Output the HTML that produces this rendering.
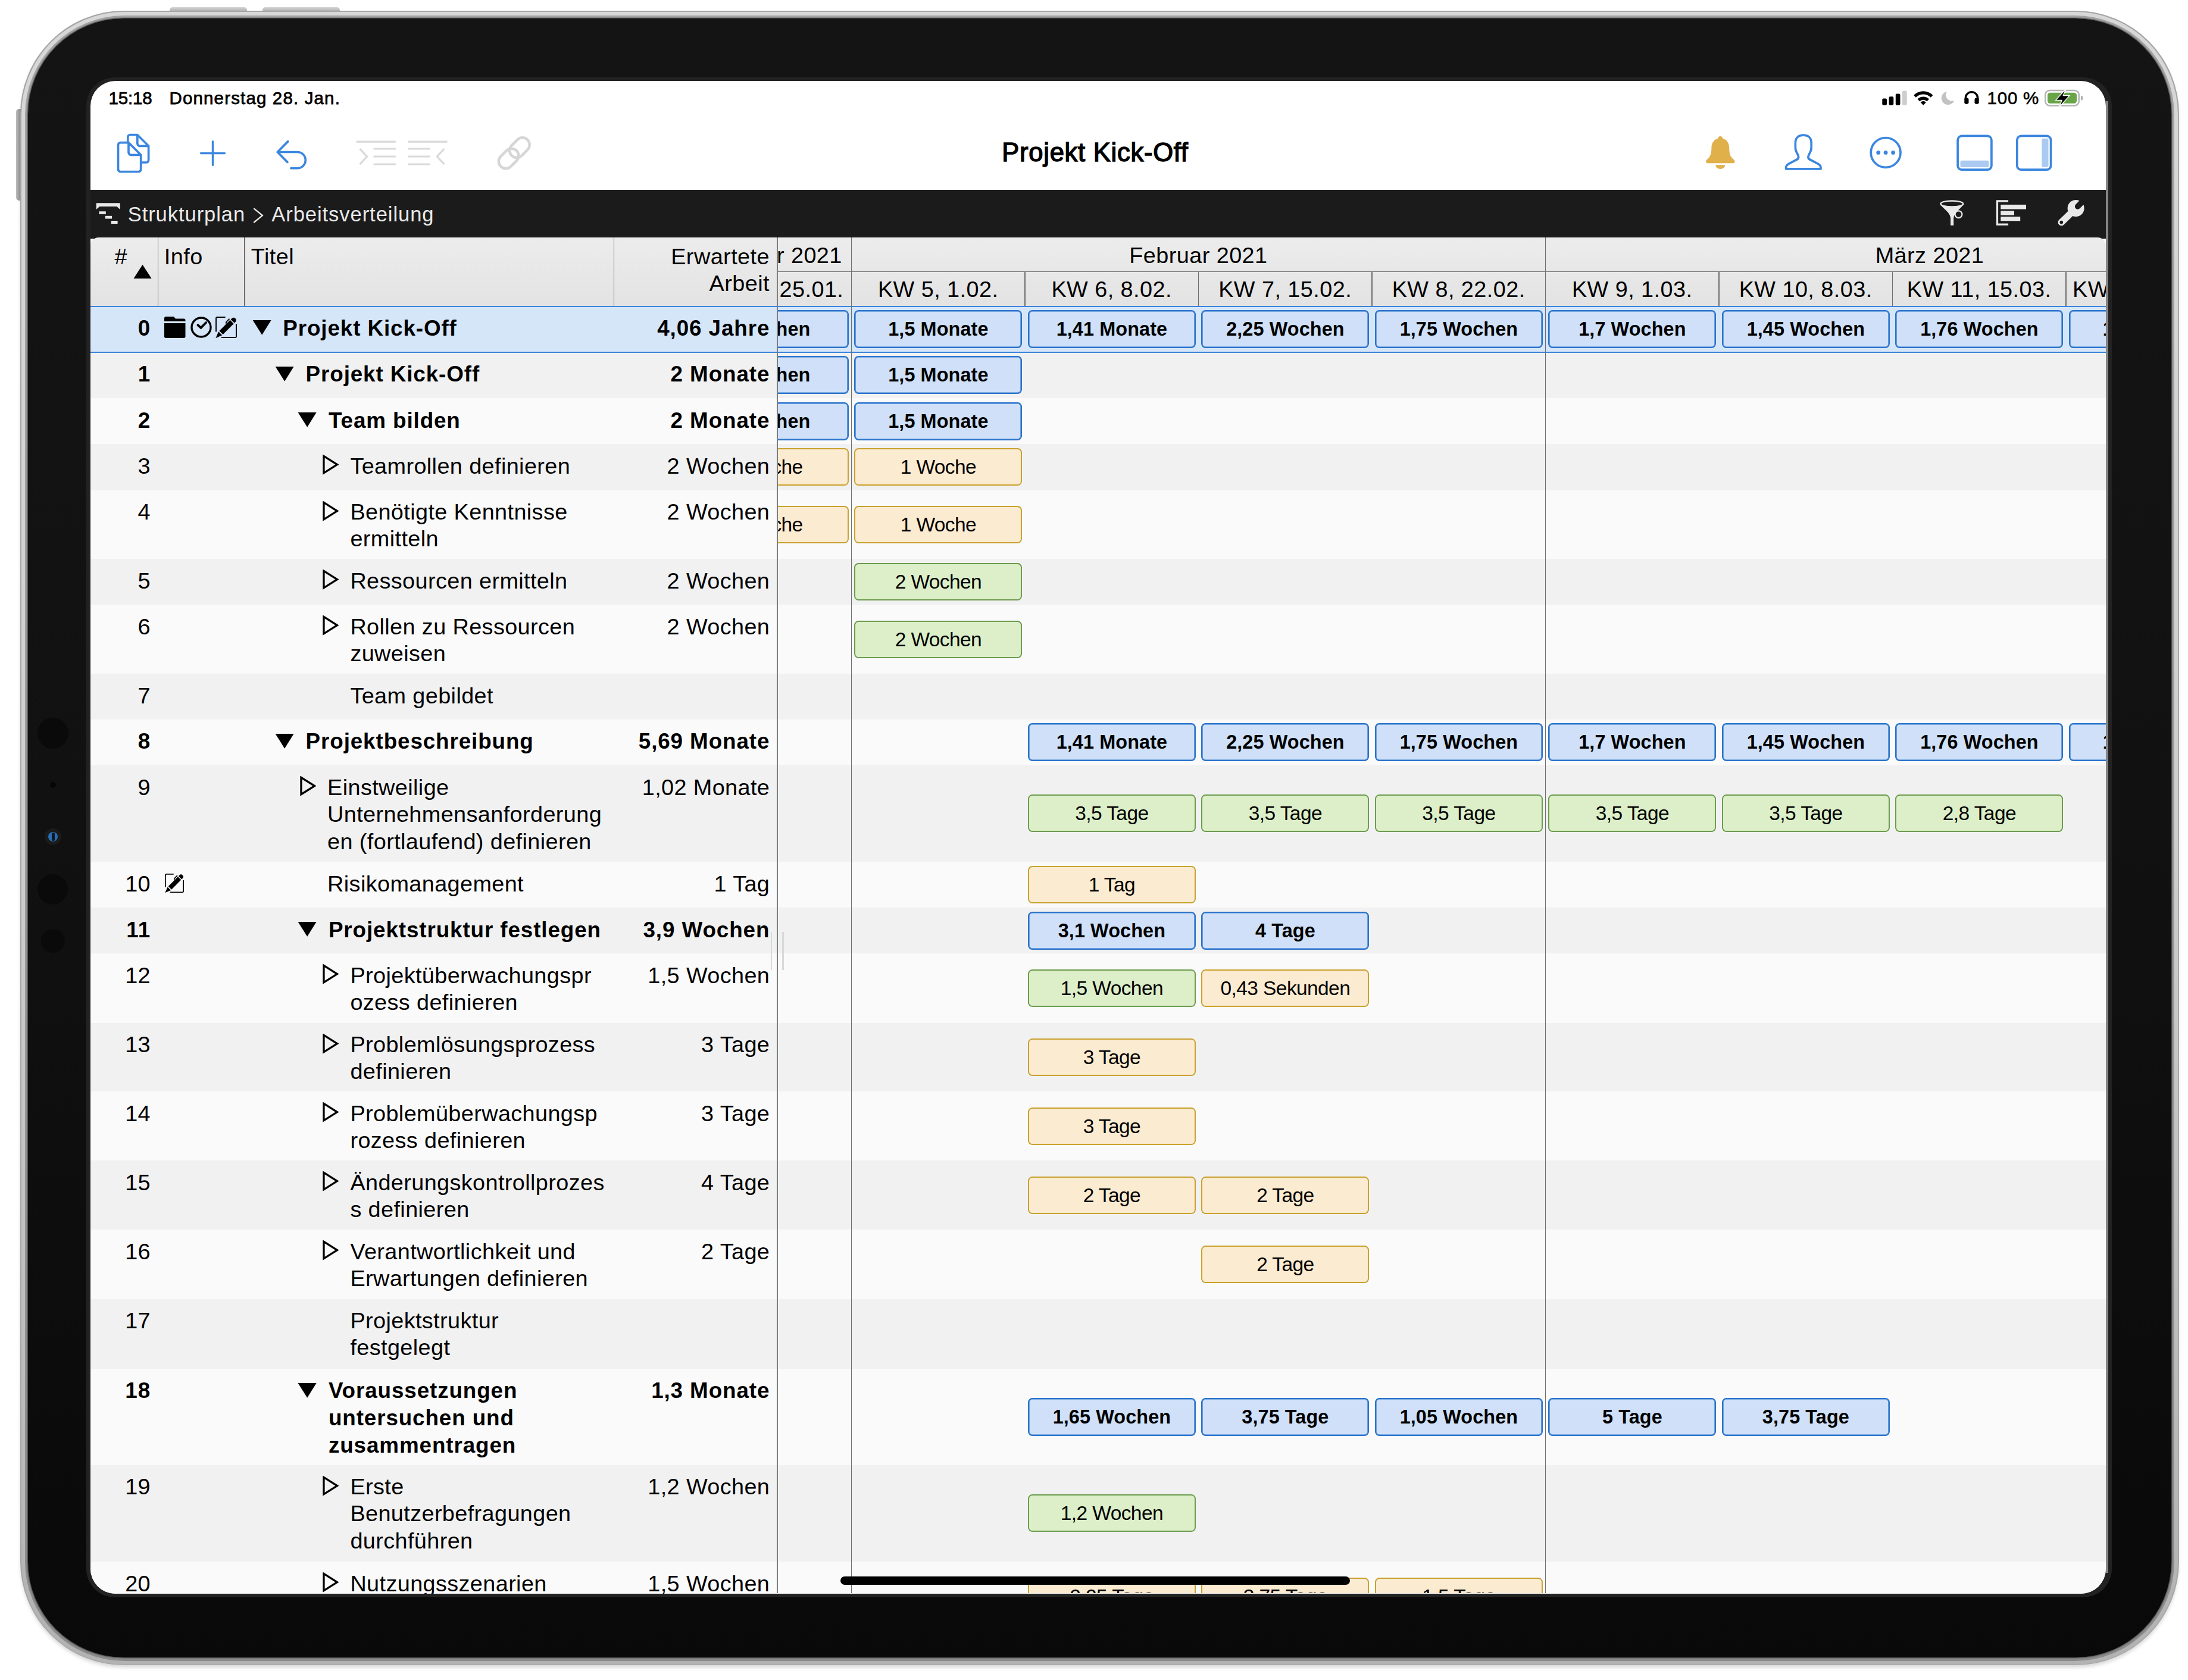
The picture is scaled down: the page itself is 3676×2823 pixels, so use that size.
<!DOCTYPE html><html lang="de"><head><meta charset="utf-8"><title>Projekt Kick-Off</title><style>html,body{margin:0;padding:0}
body{width:3676px;height:2823px;background:#fff;position:relative;overflow:hidden;font-family:"Liberation Sans",Arial,sans-serif;color:#000}
div,span,svg{position:absolute;box-sizing:border-box}
#dev{left:34px;top:18px;width:3626.5px;height:2780px;border-radius:174px;background:#a6a6a6;box-shadow:0 5px 6px -1px rgba(0,0,0,.16)}
#dev2{left:1.5px;top:1.5px;right:1.5px;bottom:1.5px;border-radius:172.5px;background:linear-gradient(180deg,#d8d8d8,#cecece 50%,#b2b2b2 100%)}
#dev3{left:7.5px;top:7.5px;right:7.5px;bottom:7.5px;border-radius:166.5px;background:linear-gradient(180deg,#a4a4a4,#9a9a9a 50%,#8a8a8a 100%)}
#bez{left:12.5px;top:12.5px;right:12.5px;bottom:13.5px;border-radius:161px;background:linear-gradient(180deg,#141414 0%,#111 50%,#090909 100%);box-shadow:0 0 2px 1px #3a3a3a}
#rim{left:145px;top:130px;width:3403px;height:2554px;border-radius:48px;background:#222}
#screen{left:152px;top:136px;width:3385.7px;height:2541.5px;border-radius:42px;overflow:hidden;background:#fff}
#in{left:-152px;top:-136px;width:3676px;height:2823px}
.btn{background:linear-gradient(180deg,#d6d6d6,#a8a8a8);border-radius:5px 5px 0 0}
.cam{border-radius:50%;background:#0a0a0a}
/* status */
.st{font-size:29.5px;line-height:36px;top:148.5px;white-space:nowrap;letter-spacing:.4px;-webkit-text-stroke:.75px #000}
#title{left:1540px;width:600px;top:230.7px;text-align:center;font-size:43.5px;line-height:50px;font-weight:400;letter-spacing:.75px;-webkit-text-stroke:1.45px #000;white-space:nowrap}
#dark{left:152px;top:319px;width:3386px;height:82px;background:#1b1b1b}
.bc{top:337.5px;font-size:34.5px;line-height:40px;color:#e9e9e9;white-space:nowrap;letter-spacing:.95px}
#hdr{left:152px;top:398.6px;width:3386px;height:115.6px;background:linear-gradient(180deg,#ececec,#e3e3e3);border-radius:14px 14px 0 0}
.h{font-size:37.8px;line-height:45.3px;white-space:nowrap;letter-spacing:.45px}
.vl{width:1.4px;background:#6f6f6f}
.hl{height:1.4px;background:#6f6f6f}
/* rows */
.row{left:152px;width:3386px;background:#fafafa;font-size:37.8px;line-height:45.75px;letter-spacing:.4px}
.row.odd{background:#f1f1f1}
.row.sel{background:#d6e6f9;box-shadow:inset 0 2px 0 #3a84db,inset 0 -2px 0 #3a84db}
.row.bd{font-weight:700;font-size:36.8px;letter-spacing:.9px}
.row.bd>.tt{margin-left:1.8px}
.num{left:0;width:101px;text-align:right;top:13.53px}
.tt{top:13.53px;white-space:nowrap}
.wk{left:600px;width:541.3px;text-align:right;top:13.53px;white-space:nowrap}
.ic{width:36px;height:36px;top:18.1px}
.tri{width:32.3px;height:25.2px;top:23.8px}
.trr{width:27.4px;height:33.3px;top:18.3px}
#gantt{left:1306.5px;top:399px;width:2231.5px;height:2278px;overflow:hidden}
.bx{width:282px;height:63px;border:2px solid;border-radius:7.5px;text-align:center;font-size:33.5px;line-height:59px;white-space:nowrap;letter-spacing:-.6px}
.bx.b{background:#cfe0f8;border-color:#2a74cc;box-shadow:inset 0 0 0 .6px #2a74cc;height:64px;font-weight:700;font-size:32.4px;letter-spacing:.1px;line-height:60.6px}
.bx.o{background:#fbebd0;border-color:#c9a12e}
.bx.g{background:#dcefc9;border-color:#6c9c4e}
.wkh{width:291.5px;text-align:center;top:65.6px}
.ic.sm{width:32px;height:32px;top:19.6px}
</style></head><body>
<div class="btn" style="left:285px;top:12px;width:130px;height:8px"></div>
<div class="btn" style="left:441px;top:12px;width:130px;height:8px"></div>
<div class="btn" style="left:27px;top:183px;width:9px;height:154px;border-radius:5px 0 0 5px;background:linear-gradient(90deg,#bbb,#8a8a8a)"></div>
<div id="dev"><div id="dev2"></div><div id="dev3"></div><div id="bez"></div></div>
<div class="cam" style="left:63px;top:1206px;width:52px;height:52px"></div>
<div class="cam" style="left:84px;top:1314px;width:10px;height:10px;background:#060606"></div>
<div class="cam" style="left:75px;top:1392px;width:28px;height:28px;background:#1b1b1b"></div>
<div class="cam" style="left:81px;top:1398px;width:16px;height:16px;background:#2a6db3"></div>
<div class="cam" style="left:86.5px;top:1399px;width:5px;height:14px;background:#101820;border-radius:2px"></div>
<div class="cam" style="left:63px;top:1469px;width:51px;height:51px"></div>
<div class="cam" style="left:69px;top:1561px;width:40px;height:40px"></div>
<div id="rim"></div>
<div id="edge" style="left:3538.200px;top:170px;width:3.600px;height:2473px;background:#858585"></div>

<div id="screen"><div id="in">
<!-- status bar -->
<span class="st" style="left:182.500px;top:147px;letter-spacing:-.15px">15:18</span>
<span class="st" style="left:284.500px;top:147px;letter-spacing:1.15px">Donnerstag 28. Jan.</span>
<span class="st" style="left:3338.500px;top:147px;letter-spacing:.8px;-webkit-text-stroke-width:.6px">100 %</span>
<svg style="left:3160px;top:148px" width="345" height="34" viewBox="3160 148 345 34">
<rect x="3162.300" y="165.600" width="7.700" height="11.200" rx="2"/><rect x="3173.600" y="162.300" width="7.700" height="14.500" rx="2"/><rect x="3184.800" y="157.400" width="7.700" height="19.400" rx="2"/><rect x="3196" y="152.400" width="7.700" height="24.400" rx="2" fill="#cdcdcd"/>
<g fill="none" stroke="#000" stroke-width="5.200"><path d="M3217 161.800a20.200 20.200 0 0 1 28.600 0" /><path d="M3223.400 168.300a11.200 11.200 0 0 1 15.800 0"/></g><path d="M3231.300 176.800l-4.600-4.800a6.500 6.500 0 0 1 9.200 0z"/>
<path d="M3271 153.800a11.200 11.200 0 1 0 12.300 15.200a10.200 10.200 0 0 1-12.300-15.200z" fill="#c2c2c2"/>
<path d="M3302.300 168v-3.200a10.200 10.200 0 0 1 20.400 0V168" fill="none" stroke="#000" stroke-width="3.400"/><rect x="3300.300" y="164.500" width="7.200" height="10.200" rx="2.400"/><rect x="3317.500" y="164.500" width="7.200" height="10.200" rx="2.400"/>
<rect x="3436.200" y="152" width="56.600" height="25.600" rx="7.500" fill="none" stroke="#b4b4b4" stroke-width="2.500"/><rect x="3440" y="155.800" width="49" height="18" rx="4.200" fill="#69a548"/><path d="M3496 160.500c2.800.8 4 2.400 4 4.300s-1.200 3.500-4 4.300z" fill="#b4b4b4"/>
<path d="M3470.700 149.500l-16.900 18.800h10.300l-4.400 11.700 17.200-19.300h-10.600z" fill="#000" stroke="#fff" stroke-width="1.300"/>
</svg>
<!-- toolbar -->
<svg style="left:152px;top:200px" width="3386" height="119" viewBox="152 200 3386 119" fill="none" stroke-linecap="round" stroke-linejoin="round">
<g stroke="#3b86df" stroke-width="3.700">
<path d="M202.500 239.600h13.500l20.700 20.700v24.200a4 4 0 0 1-4 4h-30.200a4 4 0 0 1-4-4v-40.900a4 4 0 0 1 4-4zM216 239.600v16.700a4 4 0 0 0 4 4h16.700"/>
<path d="M214.800 238.500v-8a4 4 0 0 1 4-4h12l18.800 18.800v23.700a4 4 0 0 1-4 4h-7.500M230.800 226.500v14.800a4 4 0 0 0 4 4h14.800"/>
<path d="M337.600 257.500h39.800M357.500 237.600v39.800" stroke-width="3.400"/>
<path d="M483.800 237.600l-17.600 17.900 16.600 16.900M466.500 255.500h33.200a13.600 13.600 0 0 1 0 27.200h-10.700"/>
<path d="M3029.800 227.200C3021 227.200 3016.400 232.500 3016.400 240L3016.400 248.500C3016.400 253.500 3018.800 256.500 3020.300 259.500C3022 263 3022.300 266.300 3019 268L3005 275.300C3001.600 277.200 3000.600 279 3000.600 282L3000.600 283.800L3059 283.800L3059 282C3059 279 3058 277.200 3054.600 275.300L3040.600 268C3037.300 266.300 3037.600 263 3039.300 259.500C3040.800 256.500 3043.200 253.500 3043.200 248.500L3043.200 240C3043.200 232.500 3038.600 227.200 3029.800 227.200z"/>
<circle cx="3168.100" cy="256.400" r="24.900"/>
<rect x="3289.100" y="228.400" width="56.800" height="56.800" rx="7"/>
<rect x="3388.800" y="228.400" width="56.800" height="56.800" rx="7"/>
</g>
<g fill="#3b86df"><circle cx="3155.700" cy="256.400" r="3.400"/><circle cx="3168.100" cy="256.400" r="3.400"/><circle cx="3180.600" cy="256.400" r="3.400"/></g>
<rect x="3293.500" y="269.800" width="48" height="11.200" rx="2.500" fill="#abcaf1"/>
<rect x="3430.300" y="232.800" width="11.200" height="48" rx="2.500" fill="#abcaf1"/>
<path d="M2890.300 229c2.400 0 3.900 1.500 3.900 3.600 7 2 11 8 11 16 0 10 2 15 8 20 2 1.600 2 5.700-1.500 5.700h-42.800c-3.500 0-3.500-4.100-1.500-5.700 6-5 8-10 8-20 0-8 4-14 11-16 0-2.100 1.500-3.600 3.900-3.600zM2882.300 277.300h16c0 3.600-3.500 6.600-8 6.600s-8-3-8-6.600z" fill="#e0b04b"/>
<g stroke="#d9d9d9" stroke-width="3.200" stroke-linecap="butt">
<path d="M598.700 238.200h66.100M627.500 250h37.300M627.500 263h37.300M627.500 276h37.300M604.500 250l12 13-12 13"/>
<path d="M685.400 238.200h66.100M685.400 250h37.300M685.400 263h37.300M685.400 276h37.300M746.300 250l-12 13 12 13"/>
</g>
<g stroke="#d6d6d6" stroke-width="4.500" transform="rotate(-45 863.800 257.200)"><rect x="832" y="245.200" width="37.500" height="24" rx="12"/><rect x="858" y="245.200" width="37.500" height="24" rx="12"/></g>
</svg>
<div id="title">Projekt Kick-Off</div>
<!-- dark bar -->
<div id="dark"></div>
<svg style="left:152px;top:319px" width="3386" height="80" viewBox="152 319 3386 80" fill="#e9e9e9">
<path d="M161.700 341.300h40.100v10.800l-5.600-5.200h-28.900l-5.600 5.200z"/><rect x="166.500" y="355.200" width="11.300" height="4.700"/><rect x="176.800" y="362.800" width="11.300" height="4.700"/><rect x="186.800" y="371" width="10.800" height="5"/>
<path d="M426.300 350.200l14.600 11.900-14.600 11.900" fill="none" stroke="#e9e9e9" stroke-width="2.300"/>
<ellipse cx="3279.300" cy="342.500" rx="18.900" ry="5" fill="none" stroke="#e9e9e9" stroke-width="2.400"/><path d="M3260.200 344C3266 352 3275.500 356 3277.100 366V378.700H3282.200V366C3284 356 3293 352 3298.400 344C3290 349.500 3268 349.500 3260.200 344z"/><circle cx="3290.500" cy="360.200" r="5.900" fill="none" stroke="#e9e9e9" stroke-width="2.200"/>
<path d="M3374.100 337.900h-18.600v39.200h18.600" fill="none" stroke="#e9e9e9" stroke-width="3.200"/><rect x="3361.300" y="343.900" width="42.700" height="7.600"/><rect x="3361.300" y="354.200" width="22.700" height="7.300"/><rect x="3361.300" y="364" width="32.900" height="7.300"/>
<circle cx="3487.600" cy="350" r="14"/><path d="M3463.300 373.600L3487.600 350" stroke="#e9e9e9" stroke-width="11.400" stroke-linecap="round"/><path d="M3490.700 346.900L3504 333.600" stroke="#1b1b1b" stroke-width="9.600" stroke-linecap="round"/><circle cx="3463.300" cy="373.600" r="2.800" fill="#1b1b1b"/>
</svg>
<span class="bc" style="left:214.700px;top:340.400px">Strukturplan</span>
<span class="bc" style="left:456.300px;top:340.400px">Arbeitsverteilung</span>
<!-- header -->
<div id="hdr"></div>
<span class="h" style="left:192.500px;top:408.700px">#</span>
<svg style="left:224px;top:444px" width="32" height="25" viewBox="0 0 32 25"><path d="M.5 24L15.500.8 30.600 24z"/></svg>
<span class="h" style="left:275.800px;top:408.700px">Info</span>
<span class="h" style="left:421.800px;top:408.700px">Titel</span>
<div class="h" style="left:1040px;width:253px;top:408.900px;text-align:right">Erwartete<br>Arbeit</div>
<div class="vl" style="left:264.800px;top:398.600px;height:115.600px"></div>
<div class="vl" style="left:410.300px;top:398.600px;height:115.600px"></div>
<div class="vl" style="left:1030.500px;top:398.600px;height:115.600px"></div>
<div style="left:1306.500px;top:398.600px;width:2231.500px;height:115.600px;overflow:hidden">
<div class="hl" style="left:0;top:57.100px;width:2231.500px"></div>
<div class="h" style="left:-191.700px;width:300px;top:8.200px;text-align:right">Januar 2021</div>
<div class="h" style="left:506.900px;width:400px;top:8.200px;text-align:center">Februar 2021</div>
<div class="h" style="left:1735.500px;width:400px;top:8.200px;text-align:center">März 2021</div>
<div class="h" style="left:-189.200px;width:300px;top:65.600px;text-align:right">KW 4, 25.01.</div>
<div class="h wkh" style="left:123.900px">KW 5, 1.02.</div>
<div class="h wkh" style="left:415.400px">KW 6, 8.02.</div>
<div class="h wkh" style="left:706.900px">KW 7, 15.02.</div>
<div class="h wkh" style="left:998.400px">KW 8, 22.02.</div>
<div class="h wkh" style="left:1289.900px">KW 9, 1.03.</div>
<div class="h wkh" style="left:1581.400px">KW 10, 8.03.</div>
<div class="h wkh" style="left:1872.900px">KW 11, 15.03.</div>
<div class="h" style="left:2175.500px;top:65.600px">KW 12, 22.03.</div>
<div class="vl" style="left:414.700px;top:57.100px;height:58.500px"></div>
<div class="vl" style="left:706.200px;top:57.100px;height:58.500px"></div>
<div class="vl" style="left:997.700px;top:57.100px;height:58.500px"></div>
<div class="vl" style="left:1580.700px;top:57.100px;height:58.500px"></div>
<div class="vl" style="left:1872.200px;top:57.100px;height:58.500px"></div>
<div class="vl" style="left:2163.700px;top:57.100px;height:58.500px"></div>
</div>

<div class="row odd bd" style="top:592px;height:77px">
<span class="num" style="top:14.12px">1</span>
<svg class="tri" style="left:309.8px" viewBox="0 0 32 26"><path d="M0 0H32L16 25.5Z"/></svg>
<div class="tt" style="left:359.8px;top:14.12px">Projekt Kick-Off</div>
<div class="wk" style="top:14.12px">2 Monate</div>
</div>
<div class="row bd" style="top:669px;height:77px">
<span class="num" style="top:15.12px">2</span>
<svg class="tri" style="left:348.1px" viewBox="0 0 32 26"><path d="M0 0H32L16 25.5Z"/></svg>
<div class="tt" style="left:398.1px;top:15.12px">Team bilden</div>
<div class="wk" style="top:15.12px">2 Monate</div>
</div>
<div class="row odd" style="top:746px;height:78px">
<span class="num" style="top:14.62px">3</span>
<svg class="trr" style="left:389.8px" viewBox="0 0 28 34"><path d="M2 2.5L25 17L2 31.5Z" fill="none" stroke="#000" stroke-width="3.4" stroke-linejoin="miter"/></svg>
<div class="tt" style="left:436.4px;top:14.62px">Teamrollen definieren</div>
<div class="wk" style="top:14.62px">2 Wochen</div>
</div>
<div class="row" style="top:824px;height:115px">
<span class="num" style="top:13.62px">4</span>
<svg class="trr" style="left:389.8px" viewBox="0 0 28 34"><path d="M2 2.5L25 17L2 31.5Z" fill="none" stroke="#000" stroke-width="3.4" stroke-linejoin="miter"/></svg>
<div class="tt" style="left:436.4px;top:13.62px">Benötigte Kenntnisse<br>ermitteln</div>
<div class="wk" style="top:13.62px">2 Wochen</div>
</div>
<div class="row odd" style="top:939px;height:77px">
<span class="num" style="top:14.62px">5</span>
<svg class="trr" style="left:389.8px" viewBox="0 0 28 34"><path d="M2 2.5L25 17L2 31.5Z" fill="none" stroke="#000" stroke-width="3.4" stroke-linejoin="miter"/></svg>
<div class="tt" style="left:436.4px;top:14.62px">Ressourcen ermitteln</div>
<div class="wk" style="top:14.62px">2 Wochen</div>
</div>
<div class="row" style="top:1016px;height:116px">
<span class="num" style="top:14.62px">6</span>
<svg class="trr" style="left:389.8px" viewBox="0 0 28 34"><path d="M2 2.5L25 17L2 31.5Z" fill="none" stroke="#000" stroke-width="3.4" stroke-linejoin="miter"/></svg>
<div class="tt" style="left:436.4px;top:14.62px">Rollen zu Ressourcen<br>zuweisen</div>
<div class="wk" style="top:14.62px">2 Wochen</div>
</div>
<div class="row odd" style="top:1132px;height:77px">
<span class="num" style="top:14.62px">7</span>
<div class="tt" style="left:436.4px;top:14.62px">Team gebildet</div>
</div>
<div class="row bd" style="top:1209px;height:77px">
<span class="num" style="top:14.12px">8</span>
<svg class="tri" style="left:309.8px" viewBox="0 0 32 26"><path d="M0 0H32L16 25.5Z"/></svg>
<div class="tt" style="left:359.8px;top:14.12px">Projektbeschreibung</div>
<div class="wk" style="top:14.12px">5,69 Monate</div>
</div>
<div class="row odd" style="top:1286px;height:162px">
<span class="num" style="top:14.62px">9</span>
<svg class="trr" style="left:351.5px" viewBox="0 0 28 34"><path d="M2 2.5L25 17L2 31.5Z" fill="none" stroke="#000" stroke-width="3.4" stroke-linejoin="miter"/></svg>
<div class="tt" style="left:398.1px;top:14.62px">Einstweilige<br>Unternehmensanforderung<br>en (fortlaufend) definieren</div>
<div class="wk" style="top:14.62px">1,02 Monate</div>
</div>
<div class="row" style="top:1448px;height:77px">
<span class="num" style="top:14.62px">10</span>
<svg class="ic sm" style="left:124.7px" viewBox="0 0 36 36"><g><path d="M16.600 1H2.800A1.800 1.800 0 0 0 1 2.800V25.500M9.700 35.200H33.200A1.800 1.800 0 0 0 35 33.400V12.500" fill="none" stroke="#000" stroke-width="1.900"/><g transform="translate(17.300 19.200) rotate(45)"><path d="M-4.300-16.200v-2.400a4.300 4.300 0 0 1 8.600 0v2.400z"/><path d="M-4.300-14.600h8.600V11h-8.600z"/><path d="M-4.300 12.900h8.600L0 24z"/><path d="M-6.600-15.500v7.500l1.500 2.500" fill="none" stroke="#000" stroke-width="1.900"/></g></g></svg>
<div class="tt" style="left:398.1px;top:14.62px">Risikomanagement</div>
<div class="wk" style="top:14.62px">1 Tag</div>
</div>
<div class="row odd bd" style="top:1525px;height:77px">
<span class="num" style="top:15.12px">11</span>
<svg class="tri" style="left:348.1px" viewBox="0 0 32 26"><path d="M0 0H32L16 25.5Z"/></svg>
<div class="tt" style="left:398.1px;top:15.12px">Projektstruktur festlegen</div>
<div class="wk" style="top:15.12px">3,9 Wochen</div>
</div>
<div class="row" style="top:1602px;height:117px">
<span class="num" style="top:14.62px">12</span>
<svg class="trr" style="left:389.8px" viewBox="0 0 28 34"><path d="M2 2.5L25 17L2 31.5Z" fill="none" stroke="#000" stroke-width="3.4" stroke-linejoin="miter"/></svg>
<div class="tt" style="left:436.4px;top:14.62px">Projektüberwachungspr<br>ozess definieren</div>
<div class="wk" style="top:14.62px">1,5 Wochen</div>
</div>
<div class="row odd" style="top:1719px;height:115px">
<span class="num" style="top:13.62px">13</span>
<svg class="trr" style="left:389.8px" viewBox="0 0 28 34"><path d="M2 2.5L25 17L2 31.5Z" fill="none" stroke="#000" stroke-width="3.4" stroke-linejoin="miter"/></svg>
<div class="tt" style="left:436.4px;top:13.62px">Problemlösungsprozess<br>definieren</div>
<div class="wk" style="top:13.62px">3 Tage</div>
</div>
<div class="row" style="top:1834px;height:116px">
<span class="num" style="top:14.62px">14</span>
<svg class="trr" style="left:389.8px" viewBox="0 0 28 34"><path d="M2 2.5L25 17L2 31.5Z" fill="none" stroke="#000" stroke-width="3.4" stroke-linejoin="miter"/></svg>
<div class="tt" style="left:436.4px;top:14.62px">Problemüberwachungsp<br>rozess definieren</div>
<div class="wk" style="top:14.62px">3 Tage</div>
</div>
<div class="row odd" style="top:1950px;height:116px">
<span class="num" style="top:14.62px">15</span>
<svg class="trr" style="left:389.8px" viewBox="0 0 28 34"><path d="M2 2.5L25 17L2 31.5Z" fill="none" stroke="#000" stroke-width="3.4" stroke-linejoin="miter"/></svg>
<div class="tt" style="left:436.4px;top:14.62px">Änderungskontrollprozes<br>s definieren</div>
<div class="wk" style="top:14.62px">4 Tage</div>
</div>
<div class="row" style="top:2066px;height:117px">
<span class="num" style="top:14.62px">16</span>
<svg class="trr" style="left:389.8px" viewBox="0 0 28 34"><path d="M2 2.5L25 17L2 31.5Z" fill="none" stroke="#000" stroke-width="3.4" stroke-linejoin="miter"/></svg>
<div class="tt" style="left:436.4px;top:14.62px">Verantwortlichkeit und<br>Erwartungen definieren</div>
<div class="wk" style="top:14.62px">2 Tage</div>
</div>
<div class="row odd" style="top:2183px;height:117px">
<span class="num" style="top:13.62px">17</span>
<div class="tt" style="left:436.4px;top:13.62px">Projektstruktur<br>festgelegt</div>
</div>
<div class="row bd" style="top:2300px;height:162px">
<span class="num" style="top:14.12px">18</span>
<svg class="tri" style="left:348.1px" viewBox="0 0 32 26"><path d="M0 0H32L16 25.5Z"/></svg>
<div class="tt" style="left:398.1px;top:14.12px">Voraussetzungen<br>untersuchen und<br>zusammentragen</div>
<div class="wk" style="top:14.12px">1,3 Monate</div>
</div>
<div class="row odd" style="top:2462px;height:162px">
<span class="num" style="top:13.62px">19</span>
<svg class="trr" style="left:389.8px" viewBox="0 0 28 34"><path d="M2 2.5L25 17L2 31.5Z" fill="none" stroke="#000" stroke-width="3.4" stroke-linejoin="miter"/></svg>
<div class="tt" style="left:436.4px;top:13.62px">Erste<br>Benutzerbefragungen<br>durchführen</div>
<div class="wk" style="top:13.62px">1,2 Wochen</div>
</div>
<div class="row" style="top:2624px;height:116px">
<span class="num" style="top:14.62px">20</span>
<svg class="trr" style="left:389.8px" viewBox="0 0 28 34"><path d="M2 2.5L25 17L2 31.5Z" fill="none" stroke="#000" stroke-width="3.4" stroke-linejoin="miter"/></svg>
<div class="tt" style="left:436.4px;top:14.62px">Nutzungsszenarien<br>erstellen</div>
<div class="wk" style="top:14.62px">1,5 Wochen</div>
</div>
<div class="row sel bd" style="top:514px;height:79px">
<span class="num" style="top:15.12px">0</span>
<svg class="ic" style="left:124.3px" viewBox="0 0 36 36"><g><path d="M0 3a3 3 0 0 1 3-3h11.5c1.2 0 1.8.4 2.5 1.2l2 2.3h14a2.5 2.5 0 0 1 2.5 2.5v2H0z"/><path d="M0 11h35.5v22.3a2.7 2.7 0 0 1-2.7 2.7H2.7A2.7 2.7 0 0 1 0 33.300z"/></g></svg>
<svg class="ic" style="left:167.9px" viewBox="0 0 36 36"><g fill="none" stroke="#000"><circle cx="18" cy="18" r="16" stroke-width="3.4"/><path d="M12.4 14.3l5.2 4.5 8.6-8.8" stroke-width="3.8" stroke-linecap="round" stroke-linejoin="miter"/></g></svg>
<svg class="ic" style="left:210.4px" viewBox="0 0 36 36"><g><path d="M16.600 1H2.800A1.800 1.800 0 0 0 1 2.800V25.500M9.700 35.200H33.200A1.800 1.800 0 0 0 35 33.400V12.500" fill="none" stroke="#000" stroke-width="1.900"/><g transform="translate(17.300 19.200) rotate(45)"><path d="M-4.300-16.200v-2.400a4.300 4.300 0 0 1 8.600 0v2.400z"/><path d="M-4.300-14.600h8.600V11h-8.600z"/><path d="M-4.300 12.900h8.600L0 24z"/><path d="M-6.600-15.500v7.500l1.500 2.500" fill="none" stroke="#000" stroke-width="1.900"/></g></g></svg>
<svg class="tri" style="left:271.5px" viewBox="0 0 32 26"><path d="M0 0H32L16 25.5Z"/></svg>
<div class="tt" style="left:321.5px;top:15.12px">Projekt Kick-Off</div>
<div class="wk" style="top:15.12px">4,06 Jahre</div>
</div>
<div id="gantt">
<div class="bx b" style="left:-162.6px;top:122px">2 Wochen</div>
<div class="bx b" style="left:128.9px;top:122px">1,5 Monate</div>
<div class="bx b" style="left:420.4px;top:122px">1,41 Monate</div>
<div class="bx b" style="left:711.9px;top:122px">2,25 Wochen</div>
<div class="bx b" style="left:1003.4px;top:122px">1,75 Wochen</div>
<div class="bx b" style="left:1294.9px;top:122px">1,7 Wochen</div>
<div class="bx b" style="left:1586.4px;top:122px">1,45 Wochen</div>
<div class="bx b" style="left:1877.9px;top:122px">1,76 Wochen</div>
<div class="bx b" style="left:2169.4px;top:122px">1,5 Monate</div>
<div class="bx b" style="left:-162.6px;top:199px">2 Wochen</div>
<div class="bx b" style="left:128.9px;top:199px">1,5 Monate</div>
<div class="bx b" style="left:-162.6px;top:277px">2 Wochen</div>
<div class="bx b" style="left:128.9px;top:277px">1,5 Monate</div>
<div class="bx o" style="left:-162.6px;top:354px">1 Woche</div>
<div class="bx o" style="left:128.9px;top:354px">1 Woche</div>
<div class="bx o" style="left:-162.6px;top:451px">1 Woche</div>
<div class="bx o" style="left:128.9px;top:451px">1 Woche</div>
<div class="bx g" style="left:128.9px;top:547px">2 Wochen</div>
<div class="bx g" style="left:128.9px;top:644px">2 Wochen</div>
<div class="bx b" style="left:420.4px;top:816px">1,41 Monate</div>
<div class="bx b" style="left:711.9px;top:816px">2,25 Wochen</div>
<div class="bx b" style="left:1003.4px;top:816px">1,75 Wochen</div>
<div class="bx b" style="left:1294.9px;top:816px">1,7 Wochen</div>
<div class="bx b" style="left:1586.4px;top:816px">1,45 Wochen</div>
<div class="bx b" style="left:1877.9px;top:816px">1,76 Wochen</div>
<div class="bx b" style="left:2169.4px;top:816px">1,5 Monate</div>
<div class="bx g" style="left:420.4px;top:936px">3,5 Tage</div>
<div class="bx g" style="left:711.9px;top:936px">3,5 Tage</div>
<div class="bx g" style="left:1003.4px;top:936px">3,5 Tage</div>
<div class="bx g" style="left:1294.9px;top:936px">3,5 Tage</div>
<div class="bx g" style="left:1586.4px;top:936px">3,5 Tage</div>
<div class="bx g" style="left:1877.9px;top:936px">2,8 Tage</div>
<div class="bx o" style="left:420.4px;top:1056px">1 Tag</div>
<div class="bx b" style="left:420.4px;top:1133px">3,1 Wochen</div>
<div class="bx b" style="left:711.9px;top:1133px">4 Tage</div>
<div class="bx g" style="left:420.4px;top:1230px">1,5 Wochen</div>
<div class="bx o" style="left:711.9px;top:1230px">0,43 Sekunden</div>
<div class="bx o" style="left:420.4px;top:1346px">3 Tage</div>
<div class="bx o" style="left:420.4px;top:1462px">3 Tage</div>
<div class="bx o" style="left:420.4px;top:1578px">2 Tage</div>
<div class="bx o" style="left:711.9px;top:1578px">2 Tage</div>
<div class="bx o" style="left:711.9px;top:1694px">2 Tage</div>
<div class="bx b" style="left:420.4px;top:1950px">1,65 Wochen</div>
<div class="bx b" style="left:711.9px;top:1950px">3,75 Tage</div>
<div class="bx b" style="left:1003.4px;top:1950px">1,05 Wochen</div>
<div class="bx b" style="left:1294.9px;top:1950px">5 Tage</div>
<div class="bx b" style="left:1586.4px;top:1950px">3,75 Tage</div>
<div class="bx g" style="left:420.4px;top:2112px">1,2 Wochen</div>
<div class="bx o" style="left:420.4px;top:2252px">2,25 Tage</div>
<div class="bx o" style="left:711.9px;top:2252px">3,75 Tage</div>
<div class="bx o" style="left:1003.4px;top:2252px">1,5 Tage</div>
</div>
<div class="vl" style="left:1305.300px;top:398.600px;height:2278.400px;background:#7b7f7f;width:1.800px"></div>
<div class="vl" style="left:1429.700px;top:398.600px;height:2278.400px"></div>
<div class="vl" style="left:2595.700px;top:398.600px;height:2278.400px"></div>
<div style="left:1294.600px;top:1566px;width:2.300px;height:64px;background:#d9d9d9"></div>
<div style="left:1314.300px;top:1566px;width:2.400px;height:64px;background:#d9d9d9"></div>
<div style="left:1411.500px;top:2649px;width:856.500px;height:14px;border-radius:7px;background:#000"></div>

</div></div></body></html>
